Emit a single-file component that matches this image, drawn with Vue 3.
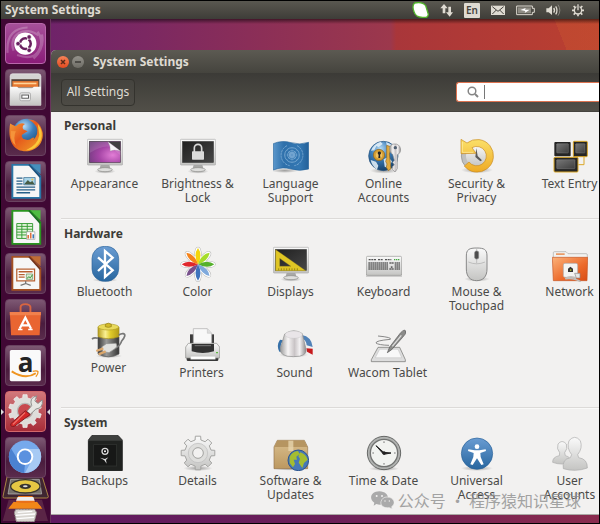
<script setup>
import { ref } from 'vue'

const query = ref('')

function gear(cx, cy, outer, inner, teeth) {
  const points = []
  const step = (Math.PI * 2) / teeth
  const at = (r, a) => `${(cx + r * Math.sin(a)).toFixed(1)} ${(cy - r * Math.cos(a)).toFixed(1)}`
  for (let i = 0; i < teeth; i++) {
    const a = i * step
    points.push(at(inner, a - step * 0.28), at(outer, a - step * 0.2), at(outer, a + step * 0.2), at(inner, a + step * 0.28))
  }
  return `M${points.join('L')}Z`
}

const petals = ['#f4d50c', '#a6dd2b', '#55b02c', '#7fa9dc', '#3f74bd', '#78518c', '#e0272c', '#f5831b']
const detailsGear = gear(54, 54, 51, 40, 8)
const launcherGear = gear(60, 60, 52, 42, 10)

const launcher = [
  { id: 'dash', name: 'Search your computer', tone: 'dash' },
  { id: 'files', name: 'Files' },
  { id: 'firefox', name: 'Firefox' },
  { id: 'writer', name: 'Writer' },
  { id: 'calc', name: 'Calc' },
  { id: 'impress', name: 'Impress' },
  { id: 'store', name: 'Software' },
  { id: 'amazon', name: 'Amazon', letter: 'a' },
  { id: 'tools', name: 'System Settings', tone: 'active' },
  { id: 'chromium', name: 'Chromium' }
]

const sections = [
  {
    title: 'Personal',
    rows: [[
      ['appearance', 'Appearance'],
      ['brightness', 'Brightness &\nLock'],
      ['language', 'Language\nSupport'],
      ['online', 'Online\nAccounts'],
      ['security', 'Security &\nPrivacy'],
      ['textentry', 'Text Entry']
    ]]
  },
  {
    title: 'Hardware',
    rows: [
      [
        ['bluetooth', 'Bluetooth'],
        ['color', 'Color'],
        ['displays', 'Displays'],
        ['keyboard', 'Keyboard'],
        ['mouse', 'Mouse &\nTouchpad'],
        ['network', 'Network']
      ],
      [
        ['power', 'Power'],
        ['printers', 'Printers'],
        ['sound', 'Sound'],
        ['wacom', 'Wacom Tablet']
      ]
    ]
  },
  {
    title: 'System',
    rows: [[
      ['backups', 'Backups'],
      ['details', 'Details'],
      ['software', 'Software &\nUpdates'],
      ['time', 'Time & Date'],
      ['universal', 'Universal\nAccess'],
      ['users', 'User\nAccounts']
    ]]
  }
]
</script>

<template>
  <div class="screen">
    <svg class="sprites" aria-hidden="true">
      <defs>
        <linearGradient id="gSilver" x1="0" y1="0" x2="0" y2="1"><stop offset="0" stop-color="#fafafa" /><stop offset="1" stop-color="#c4c4c2" /></linearGradient>
        <linearGradient id="gMetal" x1="0" y1="0" x2="1" y2="0"><stop offset="0" stop-color="#999" /><stop offset=".3" stop-color="#f7f5f5" /><stop offset=".55" stop-color="#c9c4c6" /><stop offset=".75" stop-color="#f3f1f2" /><stop offset="1" stop-color="#8a8788" /></linearGradient>
        <linearGradient id="gDark" x1="0" y1="0" x2="1" y2="1"><stop offset="0" stop-color="#1f1f1f" /><stop offset="1" stop-color="#474747" /></linearGradient>
        <radialGradient id="gPurple" cx=".75" cy=".65" r=".9"><stop offset="0" stop-color="#e27ed6" /><stop offset=".5" stop-color="#a645a6" /><stop offset="1" stop-color="#6d3b7c" /></radialGradient>
        <linearGradient id="gBlue" x1="0" y1="0" x2="0" y2="1"><stop offset="0" stop-color="#6a9cd2" /><stop offset="1" stop-color="#27669f" /></linearGradient>
        <linearGradient id="gFlag" x1="0" y1="0" x2="1" y2="0"><stop offset="0" stop-color="#5b97cb" /><stop offset=".3" stop-color="#2e70ab" /><stop offset=".75" stop-color="#3377b2" /><stop offset="1" stop-color="#236099" /></linearGradient>
        <radialGradient id="gGlobe" cx=".4" cy=".25" r=".8"><stop offset="0" stop-color="#b7dcf5" /><stop offset=".4" stop-color="#3e80bc" /><stop offset="1" stop-color="#123a63" /></radialGradient>
        <linearGradient id="gGold" x1="0" y1="0" x2="0" y2="1"><stop offset="0" stop-color="#fbe069" /><stop offset="1" stop-color="#eeaa25" /></linearGradient>
        <linearGradient id="gKey" x1="0" y1="0" x2="1" y2="1"><stop offset="0" stop-color="#777" /><stop offset="1" stop-color="#3e3e3e" /></linearGradient>
        <linearGradient id="gBatt" x1="0" y1="0" x2="1" y2="0"><stop offset="0" stop-color="#b79e1d" /><stop offset=".35" stop-color="#faf093" /><stop offset=".6" stop-color="#dfca29" /><stop offset="1" stop-color="#b39b17" /></linearGradient>
        <linearGradient id="gBody" x1="0" y1="0" x2="1" y2="0"><stop offset="0" stop-color="#3b3b3b" /><stop offset=".4" stop-color="#9a9a98" /><stop offset="1" stop-color="#353535" /></linearGradient>
        <linearGradient id="gOrange" x1="0" y1="0" x2="1" y2="1"><stop offset="0" stop-color="#fbb27a" /><stop offset=".6" stop-color="#ec6a2b" /><stop offset="1" stop-color="#d94c15" /></linearGradient>
        <linearGradient id="gBox" x1="0" y1="0" x2="0" y2="1"><stop offset="0" stop-color="#d9be8d" /><stop offset="1" stop-color="#bc9860" /></linearGradient>
        <linearGradient id="gFire" x1="0" y1="0" x2="1" y2="1"><stop offset="0" stop-color="#f5a43a" /><stop offset=".45" stop-color="#e5591c" /><stop offset="1" stop-color="#f2a729" /></linearGradient>
        <radialGradient id="gShade"><stop offset="0" stop-color="#000" stop-opacity=".35" /><stop offset="1" stop-color="#000" stop-opacity="0" /></radialGradient>
      </defs>

      <symbol id="monitor" viewBox="0 0 108 108">
        <ellipse cx="54" cy="100" rx="32" ry="7" fill="url(#gShade)" />
        <path d="M41 80H67L71 95H37Z" fill="#a9a9a7" />
        <ellipse cx="54" cy="95" rx="22" ry="6" fill="#dededc" stroke="#8f8f8d" stroke-width="2" />
        <rect x="1" y="4" width="106" height="77" rx="3" fill="url(#gSilver)" stroke="#aaa" stroke-width="2" />
        <rect x="7" y="10" width="94" height="64" fill="url(#gDark)" stroke="#333" />
      </symbol>
      <symbol id="appearance" viewBox="0 0 108 108">
        <use href="#monitor" />
        <rect x="8" y="11" width="92" height="62" fill="url(#gPurple)" />
        <path d="M8 45Q50 18 72 28L100 52V11H8Z" fill="#fff" opacity=".12" />
        <path d="M63 11H100V39Z" fill="#414141" />
        <path d="M63 11L100 39Q82 33 70 39Q72 25 63 11Z" fill="#f7f7f7" stroke="#aaa" />
      </symbol>
      <symbol id="brightness" viewBox="0 0 108 108">
        <use href="#monitor" />
        <path d="M43 42V30A11 11 0 0 1 65 30V42" fill="none" stroke="#d8d8d8" stroke-width="5" />
        <rect x="36" y="40" width="36" height="25" rx="2" fill="#dadada" />
      </symbol>
      <symbol id="language" viewBox="0 0 108 108">
        <ellipse cx="35" cy="98" rx="40" ry="7" fill="url(#gShade)" />
        <path d="M1 17Q27 6 54 14T107 13V93Q80 101 54 93T1 96Z" fill="url(#gFlag)" stroke="#2a679d" stroke-width="2" />
        <g fill="none" stroke="#9fc5e6" stroke-width="3" opacity=".6">
          <circle cx="57" cy="51" r="22" /><circle cx="57" cy="51" r="13" /><circle cx="57" cy="51" r="6" stroke-width="7" />
          <path d="M42 23A32 32 0 0 0 50 83M72 23A32 32 0 0 1 64 83" stroke-dasharray="7 2" />
          <path d="M57 29V73M36 51H78M42 36L72 66M72 36L42 66" stroke-width="1" />
        </g>
      </symbol>
      <symbol id="online" viewBox="0 0 108 108">
        <ellipse cx="54" cy="98" rx="42" ry="9" fill="url(#gShade)" />
        <circle cx="52" cy="54" r="44" fill="url(#gGlobe)" stroke="#28557e" stroke-width="2" />
        <path d="M15 38Q22 18 44 11L50 18L38 27L31 24L25 37ZM14 66L30 71L37 83L33 95Q17 83 14 66ZM60 12Q79 18 89 33L76 36L63 25ZM53 64L66 57L78 70L68 91L56 86Z" fill="#e6f2fa" opacity=".86" />
        <circle cx="39" cy="51" r="17" fill="#d69f32" stroke="#8b611b" stroke-width="2" /><circle cx="39" cy="51" r="10" fill="#efc060" />
        <path d="M35 46A5 5 0 1 1 42 50L43 60H37L38 51Z" fill="#222" />
        <path d="M62 22L77 27L70 48L75 92L67 98L61 88L63 78L59 70L62 62Z" fill="#dfaa41" stroke="#936a22" stroke-width="2" />
        <path d="M84 18C106 15 110 45 94 50V92L87 102L80 95V85L85 81L80 73L85 67L80 49C65 39 70 18 84 18Z" fill="url(#gMetal)" stroke="#8c8c8c" stroke-width="2" />
        <circle cx="88" cy="29" r="5" fill="#506071" />
      </symbol>
      <symbol id="security" viewBox="0 0 108 108">
        <ellipse cx="54" cy="96" rx="48" ry="10" fill="url(#gShade)" />
        <circle cx="53" cy="54" r="46" fill="#c0c0be" stroke="#888" stroke-width="2" />
        <circle cx="53" cy="54" r="32" fill="url(#gSilver)" />
        <path d="M52 30L56 54L69 67L64 70L49 57Z" fill="#5b5b5b" />
        <path d="M16 84A49 49 0 1 0 24 15L6 4V47L51 46L39 29A29 29 0 1 1 30 72Z" fill="url(#gGold)" stroke="#c98b22" stroke-width="2" stroke-linejoin="round" />
        <path d="M10 12V43H43" fill="none" stroke="#fff3b0" stroke-width="2" />
      </symbol>
      <symbol id="textentry" viewBox="0 0 108 108">
        <path d="M96 56V80H79" fill="none" stroke="#dba829" stroke-width="3" />
        <rect x="7" y="12" width="49" height="43" rx="3" fill="#252525" /><rect x="14" y="17" width="35" height="28" rx="2" fill="url(#gKey)" stroke="#999" />
        <rect x="64" y="10" width="42" height="46" rx="3" fill="#252525" stroke="#dba829" stroke-width="3" /><rect x="71" y="17" width="28" height="28" rx="2" fill="url(#gKey)" stroke="#999" />
        <rect x="6" y="58" width="72" height="44" rx="3" fill="#252525" stroke="#dba829" stroke-width="3" /><rect x="14" y="65" width="55" height="27" rx="2" fill="url(#gKey)" stroke="#999" />
      </symbol>
      <symbol id="bluetooth" viewBox="0 0 108 108">
        <ellipse cx="54" cy="102" rx="38" ry="6" fill="url(#gShade)" />
        <rect x="15" y="1" width="80" height="105" rx="37" fill="url(#gBlue)" stroke="#2d659b" stroke-width="2" />
        <path d="M33 34L77 73L54 93V15L77 35L33 75" fill="none" stroke="#fff" stroke-width="7" />
      </symbol>
      <symbol id="color" viewBox="0 0 108 108">
        <g stroke="#b5b5b3" stroke-width="12"><ellipse v-for="(p, i) in petals" :key="`s${i}`" cx="54" cy="29" rx="5" ry="21" :transform="`rotate(${i * 45} 54 55)`" fill="#fff" /></g>
        <g stroke="#fff" stroke-width="9"><ellipse v-for="(p, i) in petals" :key="`w${i}`" cx="54" cy="29" rx="5" ry="21" :transform="`rotate(${i * 45} 54 55)`" fill="#fff" /></g>
        <path v-for="(p, i) in petals" :key="p" d="M54 55Q39 26 54 6Q69 26 54 55Z" :transform="`rotate(${i * 45} 54 55)`" :fill="p" />
      </symbol>
      <symbol id="displays" viewBox="0 0 108 108">
        <use href="#monitor" />
        <path d="M8 11V74H98L8 11ZM20 37L54 61H20Z" fill="#e0c624" fill-rule="evenodd" stroke="#ab951b" />
        <path d="M17 67v6M25 67v6M33 67v6M41 67v6M49 67v6M57 67v6M65 67v6M73 67v6" stroke="#776710" stroke-width="2" />
      </symbol>
      <symbol id="keyboard" viewBox="0 0 108 108">
        <rect x="0" y="86" width="108" height="7" fill="#000" opacity=".15" />
        <rect x="1" y="31" width="106" height="57" rx="4" fill="url(#gSilver)" stroke="#969694" stroke-width="2" />
        <path d="M8 41H30M36 41H52M57 41H76" stroke="#555" stroke-width="4" stroke-dasharray="6 2" /><path d="M84 41H102" stroke="#45a842" stroke-width="4" stroke-dasharray="4 2" />
        <path d="M7 51H66M7 57H66M7 63H66M7 69H66M70 51H84M86 51H102M86 57H102M86 63H102M86 69H102M70 69H84M77 61v5" stroke="#636363" stroke-width="5" stroke-dasharray="5 1" />
      </symbol>
      <symbol id="mouse" viewBox="0 0 108 108">
        <ellipse cx="54" cy="99" rx="38" ry="8" fill="url(#gShade)" />
        <path d="M53 6C75 6 84 10 84 30V69C84 92 72 104 53 104S22 92 22 69V30C22 10 31 6 53 6Z" fill="url(#gSilver)" stroke="#888" stroke-width="3" />
        <path d="M28 48Q53 59 78 48M53 7V16M53 38V52" fill="none" stroke="#aaa" stroke-width="2" />
        <rect x="47" y="15" width="12" height="24" rx="5" fill="#4c4c4c" stroke="#888" stroke-width="2" />
      </symbol>
      <symbol id="network" viewBox="0 0 108 108">
        <path d="M4 40V20Q4 17 8 17H42L48 23H103Q106 23 106 27V40Z" fill="#f2f2f0" stroke="#a9a9a7" stroke-width="2" />
        <path d="M12 22H38V27H12Z" fill="#e99b67" />
        <path d="M1 34H107L105 104H4Z" fill="url(#gOrange)" stroke="#c55626" stroke-width="2" />
        <rect x="34" y="52" width="43" height="42" rx="5" fill="#f4f4f2" stroke="#aaa" stroke-width="2" />
        <path d="M48 78V68L55 62L63 68V78Z" fill="#343434" /><path d="M56 70v5" stroke="#a3ab29" stroke-width="4" />
        <path d="M68 82H84V96H73Z" fill="#e7e7e5" stroke="#888" stroke-width="2" /><path d="M73 97Q55 88 40 98Q70 95 86 108" fill="none" stroke="#c0bfbc" stroke-width="5" />
      </symbol>
      <symbol id="power" viewBox="0 0 108 108">
        <ellipse cx="54" cy="102" rx="40" ry="6" fill="url(#gShade)" />
        <path d="M21 45H84V96Q52 113 21 96Z" fill="url(#gBody)" stroke="#555" stroke-width="2" />
        <path d="M21 15V44Q52 56 84 44V15Z" fill="url(#gBatt)" stroke="#a28d1c" stroke-width="2" />
        <ellipse cx="52" cy="15" rx="31" ry="9" fill="#e9da5c" stroke="#b29e29" stroke-width="2" /><path d="M43 7V14Q52 18 61 14V7Q52 0 43 7Z" fill="#d3b928" stroke="#8f7b13" stroke-width="2" />
        <path d="M3 51Q10 45 21 49M74 78Q88 70 92 57Q108 38 97 35Q91 34 83 39" fill="none" stroke="#777" stroke-width="5" />
        <path d="M32 75L46 65L75 64Q82 74 72 80L54 92L36 89Z" fill="#e1e1df" stroke="#8d8d8b" stroke-width="2" />
        <path d="M16 87L37 79M23 97L44 88" stroke="#dba76c" stroke-width="7" />
      </symbol>
      <symbol id="printers" viewBox="0 0 108 108">
        <rect x="8" y="90" width="95" height="12" rx="4" fill="#393939" />
        <path d="M18 50V22H90V50Z" fill="#3c3c3c" />
        <path d="M28 54V5H70L83 19V54Z" fill="#f8f8f8" stroke="#aaa" stroke-width="2" /><path d="M70 5V19H83" fill="#ddd" stroke="#aaa" />
        <path d="M5 60L13 49H98L107 60V93H5Z" fill="url(#gSilver)" stroke="#8c8c8a" stroke-width="2" />
        <path d="M23 51H90V73Q56 83 23 73Z" fill="#333" /><path d="M32 56H81" stroke="#777" stroke-width="3" />
        <path d="M20 88H94V97H20Z" fill="#fff" stroke="#bbb" /><path d="M96 77h6" stroke="#65ba47" stroke-width="4" />
      </symbol>
      <symbol id="sound" viewBox="0 0 108 108">
        <ellipse cx="50" cy="83" rx="44" ry="9" fill="url(#gShade)" />
        <path d="M7 74Q-3 55 9 38L18 40Q7 55 13 74Z" fill="#3670a8" /><path d="M74 24Q104 29 107 60L89 55Q88 39 73 33Z" fill="#5182b8" /><path d="M88 64L107 65V83L90 74Z" fill="#c6191c" />
        <path d="M23 21Q50 2 76 20L87 66Q92 89 49 89T10 64Z" fill="url(#gMetal)" stroke="#8e8e8e" stroke-width="2" />
        <ellipse cx="50" cy="23" rx="26" ry="11" fill="#e9e5e8" stroke="#bbb" />
      </symbol>
      <symbol id="wacom" viewBox="0 0 108 108">
        <path d="M24 61H89L106 98V104H4V98Z" fill="#ddd" stroke="#6c6c6a" stroke-width="2" /><path d="M29 67H84L95 92H16Z" fill="#f8f8f8" stroke="#aaa" />
        <path d="M24 27Q67 31 61 37Q16 41 18 48Q25 54 57 55" fill="none" stroke="#888" stroke-width="3" />
        <path d="M52 77L59 60L92 17Q104 5 107 12Q110 20 98 31L65 68Z" fill="#8b8b89" stroke="#555" stroke-width="2" /><path d="M67 58L94 25" stroke="#ddd" stroke-width="4" />
      </symbol>
      <symbol id="backups" viewBox="0 0 108 108">
        <path d="M15 1H93L106 15V107H4V15Z" fill="#3e403e" stroke="#1d1d1d" stroke-width="2" /><rect x="4" y="17" width="102" height="90" rx="3" fill="#202220" />
        <rect x="20" y="29" width="69" height="64" fill="#171817" stroke="#343634" stroke-width="2" />
        <circle cx="54" cy="49" r="9" fill="#111" stroke="#d7d7d7" stroke-width="4" /><circle cx="54" cy="49" r="3" fill="#fff" />
        <path d="M39 68L54 72L64 67L57 75L59 86L52 76Z" fill="#ddd" />
      </symbol>
      <symbol id="details" viewBox="0 0 108 108">
        <ellipse cx="54" cy="100" rx="44" ry="8" fill="url(#gShade)" />
        <path :d="detailsGear" fill="url(#gSilver)" stroke="#a5a5a3" stroke-width="3" stroke-linejoin="round" />
        <circle cx="54" cy="54" r="29" fill="#dededc" stroke="#bbb" stroke-width="2" /><circle cx="54" cy="54" r="16" fill="#f2f1f0" stroke="#a2a2a0" stroke-width="3" />
      </symbol>
      <symbol id="software" viewBox="0 0 108 108">
        <ellipse cx="52" cy="101" rx="52" ry="6" fill="url(#gShade)" />
        <path d="M3 36L13 16H94L104 36V101H3Z" fill="url(#gBox)" stroke="#94744b" stroke-width="2" /><path d="M4 36H103L94 17H13Z" fill="#b69561" />
        <path d="M46 17H61V48H46Z" fill="#e7d4ae" opacity=".8" />
        <circle cx="76" cy="76" r="31" fill="#4778b7" stroke="#2b5591" stroke-width="3" />
        <path d="M50 66Q57 50 75 48L80 57L70 65L72 74L62 74L66 87L60 97L50 84ZM82 52Q99 58 104 74L93 84L88 99L77 83L81 71L76 64Z" fill="#a5bd30" />
      </symbol>
      <symbol id="time" viewBox="0 0 108 108">
        <ellipse cx="54" cy="101" rx="45" ry="7" fill="url(#gShade)" />
        <circle cx="54" cy="54" r="50" fill="#b0b2b0" stroke="#676967" stroke-width="3" /><circle cx="54" cy="54" r="41" fill="#f1f3f0" stroke="#727472" stroke-width="4" />
        <path d="M54 19v5M54 84v5M19 54h5M84 54h5" stroke="#777" stroke-width="3" />
        <path d="M30 32L53 52L75 54L53 58Z" fill="#222" stroke="#222" stroke-width="3" /><circle cx="54" cy="54" r="5" fill="#222" />
      </symbol>
      <symbol id="universal" viewBox="0 0 108 108">
        <ellipse cx="54" cy="100" rx="48" ry="8" fill="url(#gShade)" />
        <circle cx="54" cy="56" r="47" fill="url(#gBlue)" stroke="#2a6298" stroke-width="2" /><circle cx="54" cy="35" r="7" fill="#fff" />
        <path d="M28 43L47 46H61L80 43L81 48L64 54L65 66L74 88L67 90L54 70L41 90L34 88L43 66L44 54L27 48Z" fill="#fff" />
      </symbol>
      <symbol id="users" viewBox="0 0 108 108">
        <g fill="url(#gSilver)" stroke="#aaa" stroke-width="2">
          <path d="M2 82Q1 66 22 62L23 53Q13 42 18 27Q30 12 43 27Q48 42 38 53L40 62Q58 66 56 82Q28 92 2 82Z" />
          <path d="M34 101Q29 73 55 68L59 59Q43 39 51 17Q68-3 85 17Q93 39 77 59L80 68Q107 72 106 99Q70 112 34 101Z" />
        </g>
      </symbol>

      <symbol id="dash" viewBox="0 0 123 123">
        <g fill="none" stroke="#fff" opacity=".22"><path d="M24 84C5 35 60 2 103 36M35 98C110 124 124 56 100 24M5 91C0 32 31 12 68 11" stroke-width="7" /><path d="M86 108Q121 77 112 33" stroke-width="10" /></g>
        <circle cx="61" cy="62" r="35" fill="#fff" /><circle cx="61" cy="62" r="17" fill="none" stroke="#68205f" stroke-width="8" />
        <path d="M61 62L37 62M61 62L73 41M61 62L73 83" stroke="#fff" stroke-width="4" /><g fill="#68205f" stroke="#fff" stroke-width="2"><circle cx="38" cy="62" r="7" /><circle cx="73" cy="41" r="7" /><circle cx="73" cy="83" r="7" /></g>
      </symbol>
      <symbol id="files" viewBox="0 0 123 123">
        <path d="M13 111V20Q13 12 20 12H103Q110 12 110 20V111Z" fill="#d4d4d2" stroke="#efefef" stroke-width="2" /><path d="M17 29H105V55H17Z" fill="#54433b" /><path d="M20 35H102V54H20Z" fill="#e67831" /><path d="M24 40H96V45H24Z" fill="#ffd49a" />
        <path d="M13 53H35L41 58H82L88 53H110V111H13Z" fill="url(#gSilver)" /><rect x="44" y="72" width="33" height="25" rx="4" fill="#eee" stroke="#aaa" stroke-width="3" /><rect x="50" y="79" width="21" height="10" fill="#fff" stroke="#555" stroke-width="3" />
      </symbol>
      <symbol id="firefox" viewBox="0 0 123 123">
        <circle cx="66" cy="55" r="46" fill="url(#gGlobe)" />
        <path d="M13 24Q21 29 31 32Q44 19 60 25Q49 31 54 42L68 48L54 57Q45 60 54 72Q72 80 82 69Q94 64 84 78Q106 57 96 34Q85 17 69 11Q107 10 116 54C119 94 85 115 56 111C23 109 4 77 13 24Z" fill="url(#gFire)" />
        <path d="M100 25Q119 47 110 76Q94 109 63 108Q101 91 105 60Z" fill="#fac839" /><path d="M16 47Q10 75 31 94Q22 66 31 48Z" fill="#f5933a" />
      </symbol>
      <symbol id="writer" viewBox="0 0 123 123">
        <path d="M20 9H78L108 45V113H20Z" fill="#f6f6f6" stroke="#2976a7" stroke-width="6" /><path d="M77 7H109V39Z" fill="#4590bc" /><path d="M72 8L108 48" stroke="#1b507b" stroke-width="5" />
        <path d="M33 51H52M33 60H52M33 69H52M33 79H92M33 88H92M33 97H76" stroke="#265f88" stroke-width="4" /><path d="M56 49H92V72H56Z" fill="#a9d5e9" stroke="#265f88" stroke-width="2" /><path d="M57 70L69 57L76 64L83 60L91 71Z" fill="#485c45" /><circle cx="83" cy="55" r="3" fill="#f4be43" />
      </symbol>
      <symbol id="calc" viewBox="0 0 123 123">
        <path d="M20 9H78L108 45V113H20Z" fill="#f6f6f6" stroke="#29951f" stroke-width="6" /><path d="M77 7H109V39Z" fill="#4fbc43" /><path d="M72 8L108 48" stroke="#196c25" stroke-width="5" />
        <path d="M34 49H84V96H34ZM34 58H84M34 67H84M34 76H84M34 85H84M50 49V96M67 49V96" fill="#e3f4dc" stroke="#369c35" stroke-width="3" /><path d="M65 75H91V99H65Z" fill="#fff" stroke="#999" stroke-width="2" /><path d="M70 96V85M78 96V78" stroke="#de713d" stroke-width="5" /><path d="M86 96V83" stroke="#3d79b8" stroke-width="5" />
      </symbol>
      <symbol id="impress" viewBox="0 0 123 123">
        <path d="M20 9H78L108 45V113H20Z" fill="#f6f6f6" stroke="#a45022" stroke-width="6" /><path d="M77 7H109V39Z" fill="#bf6d35" /><path d="M72 8L108 48" stroke="#70331b" stroke-width="5" />
        <path d="M34 48H90V85H34Z" fill="#fff" stroke="#b76132" stroke-width="4" /><path d="M40 56H84M40 65H59M40 73H59" stroke="#b76132" stroke-width="4" /><path d="M64 63H84V80H64Z" fill="#d9ead0" stroke="#55844c" stroke-width="2" /><path d="M66 77L72 72L77 75L83 66" fill="none" stroke="#29912f" stroke-width="3" /><path d="M62 85V93L46 99M62 93L78 99" fill="none" stroke="#777" stroke-width="4" />
      </symbol>
      <symbol id="store" viewBox="0 0 123 123">
        <path d="M46 49V22Q47 13 61 13T77 22V49" fill="none" stroke="#d76541" stroke-width="6" /><path d="M12 38H110L106 111H16Z" fill="#e96531" /><path d="M12 38H110V48H12Z" fill="#f2814d" />
        <path d="M43 91L61 56L79 91M46 80H76" fill="none" stroke="#fff" stroke-width="7" /><path d="M38 93H52M70 93H84" stroke="#fff" stroke-width="5" />
      </symbol>
      <symbol id="amazon" viewBox="0 0 123 123">
        <rect x="12" y="13" width="98" height="98" rx="5" fill="#fafafa" />
        <path d="M18 80Q61 108 94 86" fill="none" stroke="#ef941f" stroke-width="6" /><path d="M84 80Q98 77 101 81Q102 89 94 97" fill="none" stroke="#ef941f" stroke-width="4" />
      </symbol>
      <symbol id="tools" viewBox="0 0 123 123">
        <path :d="launcherGear" fill="#deddda" stroke="#f7f7f7" stroke-width="2" /><circle cx="60" cy="60" r="24" fill="#c8484e" stroke="#b8b8b6" stroke-width="4" />
        <path d="M66 61L81 43Q72 18 97 12L91 28L101 36L114 25Q119 50 94 54L77 70Z" fill="#e6e6e3" stroke="#8c8c8a" stroke-width="3" /><path d="M61 59L76 71L27 108Q13 112 15 100Z" fill="#d32829" stroke="#841c22" stroke-width="3" /><path d="M60 65L22 102" stroke="#f17870" stroke-width="4" />
      </symbol>
      <symbol id="chromium" viewBox="0 0 123 123">
        <circle cx="60" cy="59" r="51" fill="#76a9ec" /><path d="M60 35H105A51 51 0 0 1 60 110L81 70Z" fill="#a7caf4" /><path d="M16 33L39 71L60 83L57 110A51 51 0 0 1 16 33Z" fill="#4b82d1" /><circle cx="60" cy="59" r="26" fill="#fff" /><circle cx="60" cy="59" r="20" fill="#5b91df" />
      </symbol>
      <symbol id="disk" viewBox="0 0 141 78">
        <path d="M15 3H121L139 62Q139 66 134 66H7Q2 66 3 61Z" fill="#3f2631" stroke="#aa8545" stroke-width="3" /><path d="M26 10H112L119 54H18Z" fill="#76716b" stroke="#bbb" stroke-width="2" /><ellipse cx="70" cy="31" rx="44" ry="20" fill="#e5c743" stroke="#39352e" stroke-width="4" /><ellipse cx="70" cy="31" rx="17" ry="8" fill="#35322e" /><ellipse cx="70" cy="31" rx="7" ry="3" fill="#ddd" />
      </symbol>
      <symbol id="cone" viewBox="0 0 141 78">
        <path d="M20 11H120L138 75H2Z" fill="#6d3854" opacity=".6" /><path d="M49 0H91L99 18L118 32H22L42 18Z" fill="#e97019" /><path d="M47 3H94L98 14H42Z" fill="#eee" /><path d="M35 17Q70 25 105 17L121 38H19Z" fill="#f28718" /><path d="M41 40H98L104 50L97 77H43L37 50Z" fill="#d8d5d0" stroke="#8f8985" stroke-width="3" stroke-dasharray="6 3" /><path d="M47 49L91 46M42 58L99 54M44 68L96 64" stroke="#fff" stroke-width="4" />
      </symbol>
    </svg>

    <header class="panel">
      <span class="panel-title">System Settings</span>
      <div class="indicators">
        <svg class="w17" viewBox="0 0 51 48"><path d="M8 3Q31-2 41 11L49 37Q47 49 34 46Q11 47 6 29Q-1 10 8 3Z" fill="#fff" stroke="#52b52c" stroke-width="4" /></svg>
        <svg class="w13" viewBox="0 0 39 48"><path d="M12 6L23 19H16V34H8V19H1ZM29 44L18 31H25V14H33V31H39Z" fill="#dfdbd2" /></svg>
        <span class="lang">En</span>
        <svg class="w14" viewBox="0 0 42 48"><path d="M0 11H42V39H0Z" fill="#dfdbd2" /><path d="M4 14L21 28L38 14M4 36L16 24M38 36L26 24" fill="none" stroke="#45433e" stroke-width="3" /></svg>
        <svg class="w19" viewBox="0 0 57 48"><path d="M2 12H49V19H55V31H49V38H2Z" fill="none" stroke="#dfdbd2" stroke-width="3" /><path d="M6 16H45V34H6Z" fill="#8f8c84" /><path d="M13 24L29 18L27 23H41L26 33L28 27Z" fill="#fff" /></svg>
        <svg class="w15" viewBox="0 0 45 48"><path d="M1 19H8L18 10V39L8 31H1Z" fill="#dfdbd2" /><path d="M23 18Q28 25 23 32M29 13Q37 25 29 37" fill="none" stroke="#dfdbd2" stroke-width="4" /><path d="M36 8Q47 25 36 41" fill="none" stroke="#8a8780" stroke-width="3" /></svg>
        <svg class="w12" viewBox="0 0 36 48"><path d="M18 7V13M18 37V43M0 25H6M30 25H36M5 12L10 17M31 12L26 17M5 38L10 33M31 38L26 33" stroke="#dfdbd2" stroke-width="5" /><circle cx="18" cy="25" r="11" fill="none" stroke="#dfdbd2" stroke-width="4" /><path d="M18 5V25" stroke="#45433e" stroke-width="9" /><path d="M18 7V25" stroke="#dfdbd2" stroke-width="4" /></svg>
      </div>
    </header>

    <div class="desktop">
      <nav class="launcher" aria-label="Launcher">
        <button v-for="app in launcher" :key="app.id" class="tile" :class="app.tone" :aria-label="app.name">
          <svg><use :href="`#${app.id}`" /></svg>
          <span v-if="app.letter" class="letter">{{ app.letter }}</span>
        </button>
        <div class="folded">
          <svg><use href="#cone" /></svg>
          <svg><use href="#disk" /></svg>
        </div>
      </nav>

      <main class="workspace">
        <div class="window">
          <div class="titlebar">
            <button class="dot close" aria-label="Close"><svg viewBox="0 0 12 12"><path d="M4 4L8 8M8 4L4 8" stroke="#5b2a19" stroke-width="1.5" /></svg></button>
            <button class="dot" aria-label="Minimize"><svg viewBox="0 0 12 12"><path d="M3 6H9" stroke="#3c3b37" stroke-width="1.5" /></svg></button>
            <h1>System Settings</h1>
          </div>
          <div class="toolbar">
            <button class="all">All Settings</button>
            <label class="search">
              <svg viewBox="0 0 12 12"><circle cx="5" cy="5" r="3.8" fill="none" stroke="#858585" stroke-width="1.5" /><path d="M8 8L11 11" stroke="#858585" stroke-width="2" /></svg>
              <span class="caret"></span>
              <input v-model="query" type="text" aria-label="Search settings" />
            </label>
          </div>
          <div class="content">
            <section v-for="section in sections" :key="section.title">
              <h2>{{ section.title }}</h2>
              <div v-for="(row, r) in section.rows" :key="r" class="row" :class="{ later: r > 0 }">
                <a v-for="[id, name] in row" :key="id" href="#" class="item" :class="id">
                  <svg><use :href="`#${id}`" /></svg>
                  <span>{{ name }}</span>
                </a>
              </div>
            </section>
          </div>
        </div>
      </main>
    </div>

    <div class="watermark">
      <svg viewBox="0 0 69 54"><path d="M25 1C55 1 61 35 35 40Q26 43 16 39L8 44L10 35C-9 22 2 1 25 1Z" fill="#999" /><path d="M48 18C70 18 76 39 62 47L64 54L55 50C37 53 27 42 30 32Q34 18 48 18Z" fill="#999" stroke="#f2f1f0" stroke-width="2" /><g fill="#f2f1f0"><circle cx="17" cy="15" r="3" /><circle cx="33" cy="15" r="3" /><circle cx="42" cy="30" r="2" /><circle cx="55" cy="30" r="2" /></g></svg>
      <span>公众号 · 程序猿知识星球</span>
    </div>
  </div>
</template>

<style>
body {
  background: #000;
}
</style>

<style scoped>
* {
  box-sizing: border-box;
}
.screen {
  position: relative;
  display: flex;
  flex-direction: column;
  min-height: 100vh;
  padding: 1px;
  overflow: hidden;
  background: #000;
  font: 12px/14px "Noto Sans", sans-serif;
  color: #4a4a48;
}
.sprites {
  position: absolute;
  width: 0;
  height: 0;
}
button {
  padding: 0;
  border: 0;
  font: inherit;
  color: inherit;
}
svg {
  display: block;
}
h1,
h2 {
  margin: 0;
  font-size: 12px;
  line-height: 16px;
}
.panel {
  display: flex;
  align-items: center;
  justify-content: space-between;
  height: 18px;
  padding: 0 15px 0 4px;
  background: linear-gradient(#5a5850, #3e3d38);
  color: #dfdbd2;
}
.panel-title {
  font-weight: 700;
  line-height: 16px;
}
.indicators {
  display: flex;
  align-items: center;
  gap: 11px;
}
.indicators svg {
  height: 16px;
}
.w12 { width: 12px; }
.w13 { width: 13px; }
.w14 { width: 14px; }
.w15 { width: 15px; }
.w17 { width: 17px; }
.w19 { width: 19px; }
.lang {
  width: 16px;
  height: 15px;
  border-radius: 1px;
  background: #dfdbd2;
  color: #45433e;
  font-size: 10px;
  font-weight: 600;
  line-height: 15px;
  text-align: center;
}
.desktop {
  display: flex;
  flex: 1;
}
.launcher {
  display: flex;
  flex: none;
  flex-direction: column;
  gap: 5px;
  width: 50px;
  padding: 4px 4px 0;
  border-right: 1px solid #69345c;
  background: #400834;
}
.tile {
  position: relative;
  width: 41px;
  height: 41px;
  border: 1px solid #694260;
  border-radius: 4px;
  background: linear-gradient(#7d5873, #4a1c3e 60%, #5a2b4c);
}
.tile svg {
  width: 39px;
  height: 39px;
}
.letter {
  position: absolute;
  inset: 0;
  font: 700 26px/32px "Open Sans", sans-serif;
  color: #242424;
  text-align: center;
}
.tile.dash {
  border-color: #b866ab;
  background: linear-gradient(#a65099, #8b1c79);
}
.tile.active {
  border-color: #d2686b;
  background: linear-gradient(#d1787b, #a72c38);
}
.tile.active::before,
.tile.active::after {
  content: "";
  position: absolute;
  top: 17px;
  border: 3px solid transparent;
}
.tile.active::before {
  left: -5px;
  border-right-width: 0;
  border-left-color: #ddd;
}
.tile.active::after {
  right: -5px;
  border-left-width: 0;
  border-right-color: #ddd;
}
.folded {
  display: flex;
  flex-direction: column-reverse;
  margin: -7px -3px 0;
}
.folded svg {
  width: 47px;
  height: 26px;
}
.folded svg:first-child {
  margin-top: -6px;
}
.workspace {
  flex: 1;
  min-width: 0;
  padding: 31px 0 8px;
  background:
    linear-gradient(#0008, #0000 5px),
    linear-gradient(90deg, #5f1a60, #6b1f58 50%, #8a2b4e) bottom / 100% 8px no-repeat,
    linear-gradient(68deg, #0000 92%, #cd5a2f55 92%) top / 100% 31px no-repeat,
    linear-gradient(90deg, #6f2369, #7b2862 17%, #8a2e58 36%, #9c384c 62%, #a9363a 63%, #bb4030);
}
.window {
  display: flex;
  flex-direction: column;
  height: 100%;
  border-radius: 5px 0 0;
  overflow: hidden;
  background: #f2f1f0;
}
.titlebar {
  display: flex;
  align-items: center;
  gap: 3px;
  height: 23px;
  padding-left: 6px;
  background: linear-gradient(#5c5a52, #45443e);
  color: #dfdbd2;
}
.titlebar h1 {
  margin-left: 6px;
}
.dot {
  width: 12px;
  height: 12px;
  border-radius: 50%;
  background: linear-gradient(#94928b, #6e6c65);
}
.dot.close {
  background: linear-gradient(#f68358, #e0491f);
}
.toolbar {
  display: flex;
  align-items: center;
  justify-content: space-between;
  height: 39px;
  padding-left: 10px;
  background: linear-gradient(#3c3b37, #514f48);
  border-bottom: 1px solid #45433e;
}
.all {
  width: 74px;
  height: 27px;
  border: 1px solid #34332e;
  border-radius: 4px;
  background: linear-gradient(#45443f, #4d4b45);
  color: #dfdbd2;
}
.search {
  position: relative;
  width: 143px;
  height: 20px;
}
.search input {
  display: block;
  width: 100%;
  height: 100%;
  padding: 0 8px 0 28px;
  border: 1px solid #dd7350;
  border-right: 0;
  border-radius: 3px 0 0 3px;
  outline: 0;
  background: #fff;
  font: inherit;
}
.search svg {
  position: absolute;
  top: 4px;
  left: 11px;
  width: 12px;
  height: 12px;
}
.caret {
  position: absolute;
  top: 3px;
  left: 28px;
  width: 1px;
  height: 14px;
  background: #777;
}
.content {
  flex: 1;
  padding-left: 10px;
  border-bottom: 1px solid #aaa8a4;
}
section {
  padding: 6px 0 13px;
}
section + section {
  padding-top: 7px;
  border-top: 1px solid #dcdad8;
  box-shadow: inset 0 1px #f9f9f8;
}
section:last-child {
  padding-bottom: 10px;
}
h2 {
  margin: 0 0 4px 3px;
  color: #3c3b37;
}
.row {
  display: grid;
  grid-template-columns: repeat(6, 93px);
  margin-left: -3px;
}
.row.later {
  margin: 9px 0 0 1px;
}
.item {
  display: flex;
  flex-direction: column;
  align-items: center;
  gap: 3px;
  color: inherit;
  text-align: center;
  text-decoration: none;
}
.later .item:not(.power) {
  padding-top: 5px;
}
.item svg {
  width: 36px;
  height: 36px;
}
.item span {
  min-height: 28px;
  white-space: pre;
}
.watermark {
  position: absolute;
  right: 19px;
  bottom: 12px;
  display: flex;
  align-items: center;
  gap: 4px;
  color: #8f8f8f;
  font: 16px/24px "Noto Sans CJK SC", sans-serif;
  opacity: .8;
  pointer-events: none;
}
.watermark svg {
  width: 23px;
  height: 18px;
}
</style>
